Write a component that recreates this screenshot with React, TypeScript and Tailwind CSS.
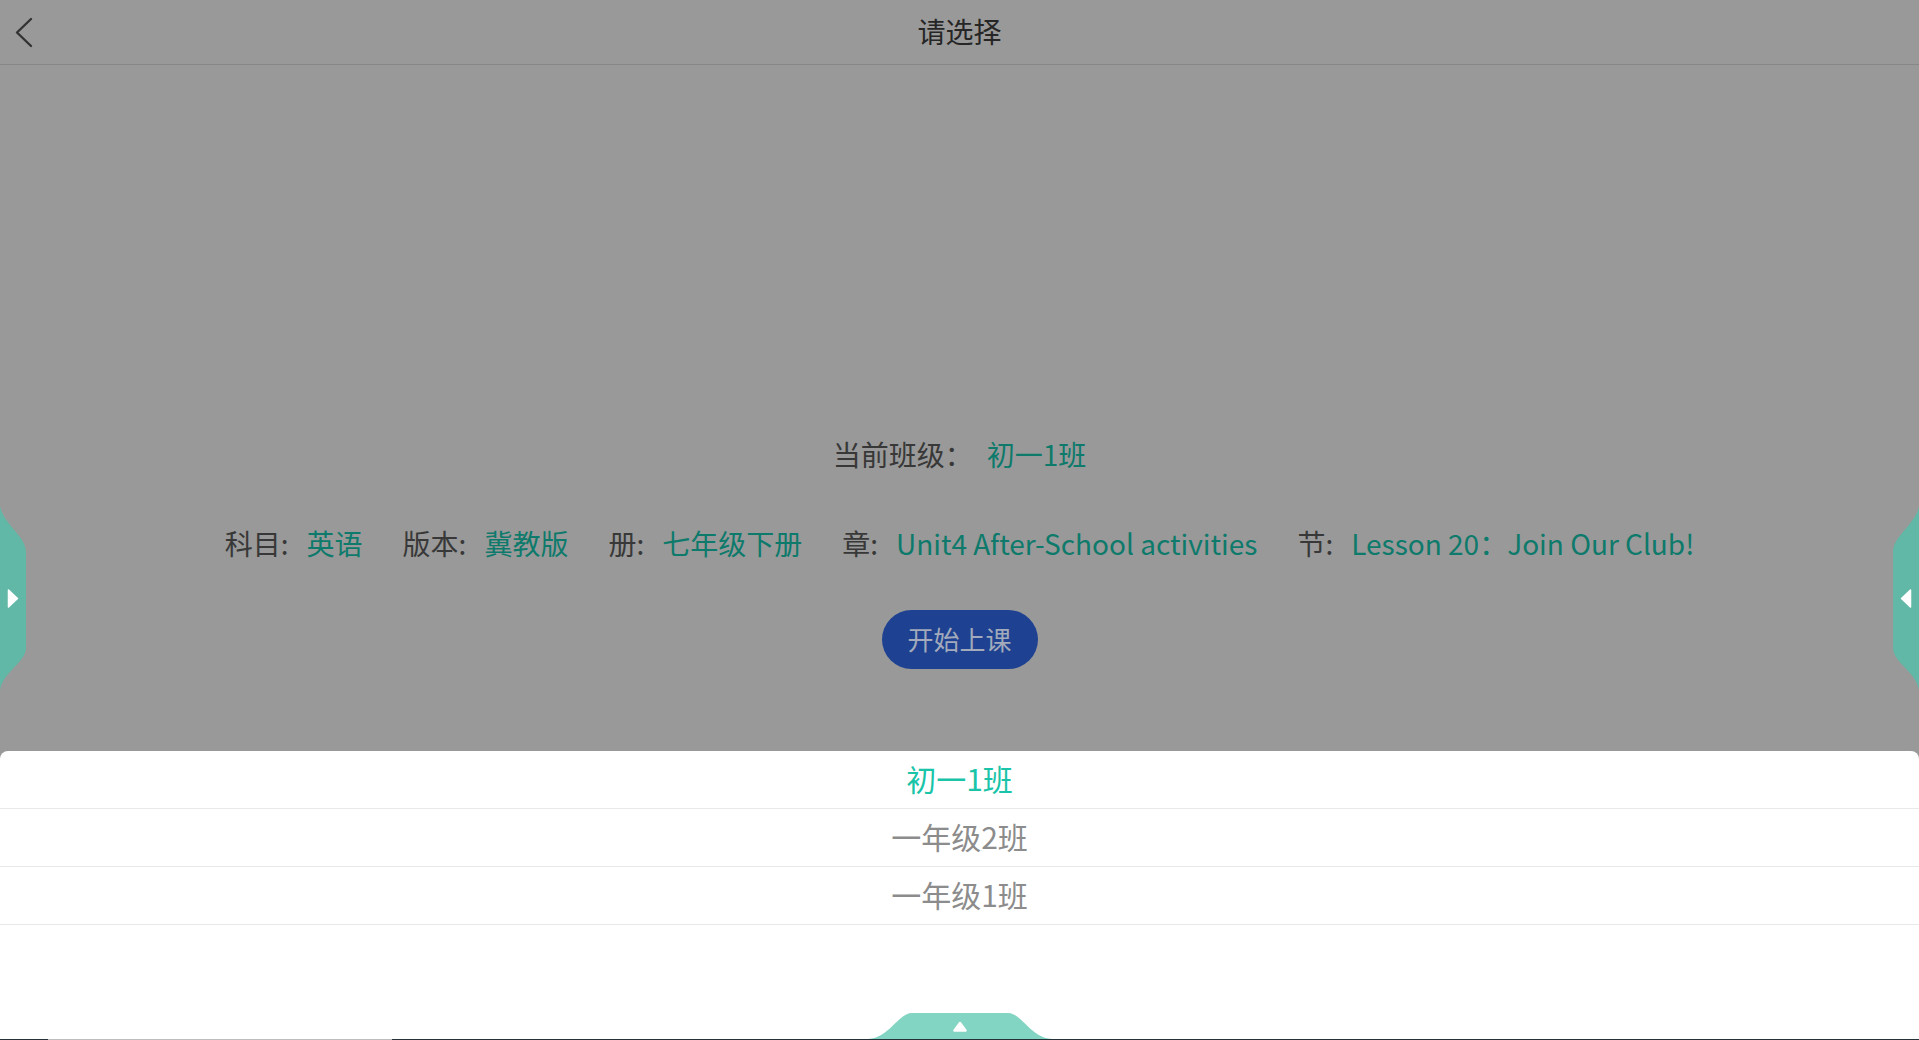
import React from 'react';

const fontStack = "font-['Noto_Sans_CJK_SC','Noto_Sans',sans-serif]";

const courseInfo = [
  { label: '科目:', value: '英语' },
  { label: '版本:', value: '冀教版' },
  { label: '册:', value: '七年级下册' },
  { label: '章:', value: 'Unit4 After-School activities' },
  { label: '节:', value: 'Lesson 20：Join Our Club!' },
];

const classes = ['初一1班', '一年级2班', '一年级1班'];

// side handle, drawn pointing right; flipped for the right edge
const SideHandle = ({ flip }: { flip?: boolean }) => (
  <svg width="26" height="184" viewBox="0 0 26 184" className={flip ? '-scale-x-100' : ''}>
    <path d="M0 0 C3 18 26 30 26 46 L26 142 C26 156 3 166 0 184 Z" fill="#62b8a6" />
    <path d="M8.5 84 L17.5 92.5 L8.5 101 Z" fill="#ffffff" stroke="#ffffff" strokeWidth="1.5" strokeLinejoin="round" />
  </svg>
);

const App = () => {
  return (
    <div className={`relative w-full h-[1040px] overflow-hidden bg-[#999999] flex flex-col ${fontStack}`}>
      {/* header */}
      <header className="h-[65px] shrink-0 border-b border-[#878787] grid grid-cols-[1fr_auto_1fr] items-center">
        <div className="pl-[14px] flex items-center">
          <svg width="20" height="32" viewBox="0 0 20 32">
            <path d="M17 3 L3 16.5 L17 30" fill="none" stroke="#333333" strokeWidth="2.4" strokeLinecap="round" strokeLinejoin="round" />
          </svg>
        </div>
        <h1 className="text-[28px] leading-none text-[#262626] pb-[2px]">请选择</h1>
        <div />
      </header>

      {/* current selection */}
      <main className="flex-1 flex flex-col items-center pt-[369px]">
        <div className="h-[40px] flex items-center text-[28px] leading-none">
          <span className="text-[#383838]">当前班级：</span>
          <span className="ml-[14px] text-[#0d7a6b]">初一1班</span>
        </div>
        <div className="mt-[49px] h-[40px] flex items-center gap-[40px] text-[28px] leading-none whitespace-nowrap">
          {courseInfo.map((item) => (
            <div key={item.label} className="flex items-center">
              <span className="text-[#383838]">{item.label}</span>
              <span className="ml-[18px] text-[#0d7a6b]">{item.value}</span>
            </div>
          ))}
        </div>
        <button className="mt-[47px] w-[156px] h-[59px] rounded-full bg-[#1e4291] text-[#a2aabb] text-[26px] leading-none flex items-center justify-center pb-[2px]">
          开始上课
        </button>
      </main>

      {/* bottom sheet */}
      <section className="h-[289px] shrink-0 bg-white rounded-t-[8px] flex flex-col">
        {classes.map((name, i) => (
          <div
            key={name}
            className={`h-[58px] shrink-0 border-b border-[#e9e9e9] flex items-center justify-center pb-[3px] text-[30px] leading-none ${
              i === 0 ? 'text-[#19c4a8]' : 'text-[#8c8c8c]'
            }`}
          >
            {name}
          </div>
        ))}
        <div className="flex-1" />
        <div className="flex justify-center">
          <svg width="186" height="26" viewBox="0 0 186 26" className="block">
            <path d="M0 26 C22 26 31 0 45 0 L141 0 C155 0 164 26 186 26 Z" fill="#82d4c3" />
            <path d="M87.5 17.5 L93 10 L98.5 17.5 Z" fill="#ffffff" stroke="#ffffff" strokeWidth="2.5" strokeLinejoin="round" />
          </svg>
        </div>
        <div className="h-[1px] flex">
          <div className="w-[48px] bg-[#26323a]" />
          <div className="w-[344px] bg-[#bdbdbd]" />
          <div className="flex-1 bg-[#26323a]" />
        </div>
      </section>

      {/* edge handles */}
      <div className="absolute left-0 top-[506px]">
        <SideHandle />
      </div>
      <div className="absolute right-0 top-[506px]">
        <SideHandle flip />
      </div>
    </div>
  );
};

export default App;
